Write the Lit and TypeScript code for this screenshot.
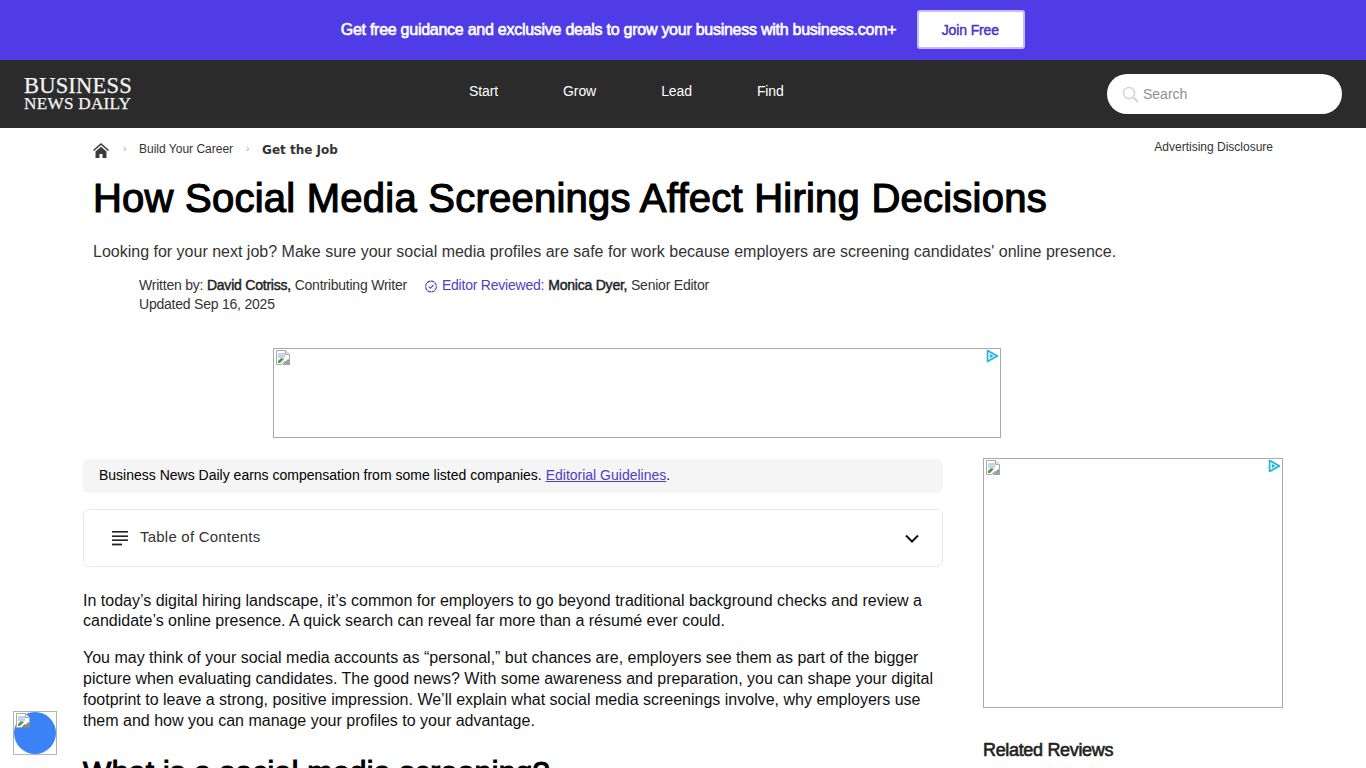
import { LitElement, html, css, svg } from 'lit';
import { customElement } from 'lit/decorators.js';

const brokenImage = svg`<svg class="broken" width="16" height="16" viewBox="0 0 16 16">
  <path d="M1.5 .5h9l4 4v5l-3 3-2-1-3 3h-5z" fill="#fff" stroke="#a9a9a9"/>
  <path d="M10.5 .5v4h4" fill="#e6e6e6" stroke="#a9a9a9"/>
  <path d="M3 3h7v5H3z" fill="#c3d5f2"/>
  <path d="M3 11l3-3 3 1-4 4H3z" fill="#4a9d4a"/>
  <path d="M8 14l5-5 2 1v5H8z" fill="#8b8b8b" opacity=".8"/>
</svg>`;

const adChoice = svg`<svg class="adchoice" width="14" height="14" viewBox="0 0 14 14">
  <path d="M2.5 1.5v11l10-5.5z" fill="#d6f2f8" stroke="#27b4d6" stroke-width="1.6" stroke-linejoin="round"/>
  <path d="M5 5v4l3.5-2z" fill="#27b4d6"/>
</svg>`;

@customElement('app-root')
export class AppRoot extends LitElement {
  static styles = css`
    :host {
      display: block;
      height: 768px;
      overflow: hidden;
      position: relative;
      font-family: 'Liberation Sans', Arial, sans-serif;
      color: #000;
      background: #fff;
    }
    a { color: inherit; text-decoration: none; }

    .promo {
      height: 60px;
      background: #4f3ce6;
      display: flex;
      align-items: center;
      justify-content: center;
      gap: 21px;
      color: #fff;
      font-size: 16px;
      letter-spacing: -0.26px;
      -webkit-text-stroke: 0.6px currentColor;
    }
    .join {
      width: 108px;
      height: 39px;
      margin-bottom: 1px;
      padding-right: 2px;
      box-sizing: border-box;
      background: #fff;
      border: 2px solid #c5bef6;
      border-radius: 3px;
      color: #4438c4;
      font: 400 14px 'Liberation Sans', Arial, sans-serif;
      letter-spacing: -0.12px;
      -webkit-text-stroke: 0.45px currentColor;
      display: flex;
      align-items: center;
      justify-content: center;
    }

    .topbar {
      height: 68px;
      background: #2b2b2b;
      display: flex;
      align-items: center;
      padding: 0 24px;
      color: #fff;
    }
    .logo {
      width: 445px;
      font-family: 'Liberation Serif', 'DejaVu Serif', serif;
      color: #f4f4f4;
      line-height: 1;
      padding-bottom: 2px;
      -webkit-text-stroke: 0.25px currentColor;
    }
    .logo div:first-child { font-size: 22.5px; height: 20px; letter-spacing: 0.2px; }
    .logo div:last-child { font-size: 17.2px; height: 16px; letter-spacing: 0.25px; }
    .nav {
      display: flex;
      gap: 65px;
      font-size: 14px;
      flex: 1;
      padding-bottom: 6px;
      letter-spacing: -0.1px;
    }
    .search {
      width: 235px;
      height: 40px;
      background: #fff;
      border-radius: 20px;
      display: flex;
      align-items: center;
      gap: 4px;
      padding-left: 15px;
      box-sizing: border-box;
      color: #8f8f8f;
      font-size: 14px;
    }

    .page { padding: 0 83px; }

    .crumbs {
      height: 42px;
      display: flex;
      align-items: flex-start;
      padding-left: 10px;
      color: #333;
      font-size: 12px;
    }
    .crumbs > * { margin-top: 14px; }
    .crumbs svg.home { margin-top: 15px; margin-right: 14px; }
    .sep { color: #aaa; width: 16px; margin-top: 15px !important; font-size: 10px; }
    .crumb { margin-right: 13px; }
    .crumbs b {
      font-family: 'DejaVu Sans', Verdana, sans-serif;
      font-size: 12px;
      margin-top: 15px;
    }
    .disclosure { margin-left: auto; margin-right: 10px; margin-top: 12px !important; color: #333; }

    h1 {
      margin: 0 0 0 10px;
      font-size: 40px;
      line-height: 56px;
      font-weight: 400;
      color: #000;
      letter-spacing: 0.235px;
      -webkit-text-stroke: 1.2px currentColor;
    }
    .dek {
      margin: 14px 0 0 10px;
      font-size: 16px;
      line-height: 24px;
      color: #333;
    }
    .byline {
      margin: 12px 0 0 56px;
      font-size: 14px;
      line-height: 19px;
      color: #333;
      letter-spacing: -0.22px;
    }
    .byline b { color: #222; font-weight: 400; -webkit-text-stroke: 0.45px currentColor; }
    .byline .row { display: flex; align-items: center; }
    .reviewed { color: #4f3ec4; margin-left: 17px; display: flex; align-items: center; gap: 4px; margin-right: 4px; }

    .ad-top {
      width: 728px;
      height: 90px;
      box-sizing: border-box;
      margin: 34px 0 20px 190px;
      border: 1px solid #aaa;
      position: relative;
    }
    .broken { position: absolute; left: 1px; top: 1px; }
    .adchoice { position: absolute; right: 1px; top: 0; }

    .columns { display: flex; gap: 40px; }
    .main { width: 860px; flex: none; }

    .notice {
      height: 34px;
      margin-top: 1px;
      padding-bottom: 2px;
      box-sizing: border-box;
      background: #f5f5f5;
      border-radius: 6px;
      padding-left: 16px;
      line-height: 32px;
      font-size: 14px;
    }
    .notice a { color: #4f3ec4; text-decoration: underline; }

    .toc {
      margin: 16px 0 23.55px;
      height: 58px;
      box-sizing: border-box;
      border: 1px solid #e8e8e8;
      border-radius: 6px;
      display: flex;
      align-items: center;
      padding: 0 23px 4px 28px;
      gap: 11px;
      color: #333;
      font-size: 15px;
      letter-spacing: 0.22px;
    }
    .toc span { flex: 1; }
    .toc svg:first-child { margin-top: 4px; }
    .toc svg:last-child { margin-top: 4px; }

    p {
      margin: 0 0 16px;
      font-size: 16px;
      line-height: 20.8px;
      color: #111;
    }
    h2 {
      margin: 21px 0 0;
      font-size: 30px;
      line-height: 40px;
      font-weight: 400;
      letter-spacing: 0.35px;
      -webkit-text-stroke: 1.1px currentColor;
    }

    .side { width: 300px; }
    .ad-side {
      width: 300px;
      height: 250px;
      box-sizing: border-box;
      border: 1px solid #aaa;
      position: relative;
    }
    .side h3 {
      margin: 31px 0 0;
      font-size: 18px;
      line-height: 22px;
      font-weight: 400;
      color: #222;
      letter-spacing: -0.33px;
      -webkit-text-stroke: 0.6px currentColor;
    }

    .a11y {
      position: absolute;
      left: 13px;
      top: 711px;
      width: 44px;
      height: 44px;
      box-sizing: border-box;
      border: 1px solid #b4b4b4;
    }
    .a11y i {
      position: absolute;
      left: 0;
      top: 0;
      width: 42px;
      height: 42px;
      border-radius: 50%;
      background: #3b82f6;
    }
  `;

  render() {
    return html`
      <div class="promo">
        <span>Get free guidance and exclusive deals to grow your business with business.com+</span>
        <a class="join" href="#">Join Free</a>
      </div>

      <header class="topbar">
        <a class="logo" href="#"><div>BUSINESS</div><div>NEWS DAILY</div></a>
        <nav class="nav">
          <a href="#">Start</a><a href="#">Grow</a><a href="#">Lead</a><a href="#">Find</a>
        </nav>
        <div class="search">
          <svg width="17" height="17" viewBox="0 0 17 17" fill="none" stroke="#d4d4d4">
            <circle cx="7" cy="7" r="5.6" stroke-width="1.5"/>
            <path d="M11 11l5 5" stroke-width="2"/>
          </svg>
          Search
        </div>
      </header>

      <div class="page">
        <div class="crumbs">
          <svg class="home" width="16" height="15" viewBox="0 0 16 15" fill="#3c3c3c">
            <path d="M8 0L0 7l1 1 7-6 7 6 1-1z"/>
            <path d="M2.5 8.5L8 3.8l5.5 4.7V15H9.5v-4h-3v4h-4z"/>
          </svg>
          <span class="sep">›</span>
          <a class="crumb" href="#">Build Your Career</a>
          <span class="sep">›</span>
          <b>Get the Job</b>
          <a class="disclosure" href="#">Advertising Disclosure</a>
        </div>

        <h1>How Social Media Screenings Affect Hiring Decisions</h1>
        <div class="dek">Looking for your next job? Make sure your social media profiles are safe for work because employers are screening candidates' online presence.</div>

        <div class="byline">
          <div class="row">
            <span>Written by: <b>David Cotriss,</b> Contributing Writer</span>
            <span class="reviewed">
              <svg width="14" height="14" viewBox="0 0 14 14" fill="none" stroke="#4f3ec4" stroke-width="1.1">
                <circle cx="7" cy="7.5" r="5.4" stroke-dasharray="3.6 .5"/>
                <path d="M4.6 7.7l1.7 1.6 3.2-3.3"/>
              </svg>
              Editor Reviewed:
            </span>
            <span><b>Monica Dyer,</b> Senior Editor</span>
          </div>
          <div>Updated Sep 16, 2025</div>
        </div>

        <div class="ad-top">${brokenImage}${adChoice}</div>

        <div class="columns">
          <main class="main">
            <div class="notice">Business News Daily earns compensation from some listed companies. <a href="#">Editorial Guidelines</a>.</div>

            <div class="toc">
              <svg width="17" height="16" viewBox="0 0 17 16" fill="#222">
                <rect x="0" y="1" width="16" height="1.6"/>
                <rect x="0" y="5.4" width="16" height="1.6"/>
                <rect x="0" y="9.4" width="16" height="1.6"/>
                <rect x="0" y="13.6" width="10" height="1.8"/>
              </svg>
              <span>Table of Contents</span>
              <svg width="14" height="9" viewBox="0 0 14 9" fill="none" stroke="#111" stroke-width="2">
                <path d="M1 1.5l6 6 6-6"/>
              </svg>
            </div>

            <p>In today’s digital hiring landscape, it’s common for employers to go beyond traditional background checks and review a candidate’s online presence. A quick search can reveal far more than a résumé ever could.</p>
            <p>You may think of your social media accounts as “personal,” but chances are, employers see them as part of the bigger picture when evaluating candidates. The good news? With some awareness and preparation, you can shape your digital footprint to leave a strong, positive impression. We’ll explain what social media screenings involve, why employers use them and how you can manage your profiles to your advantage.</p>
            <h2>What is a social media screening?</h2>
          </main>

          <aside class="side">
            <div class="ad-side">${brokenImage}${adChoice}</div>
            <h3>Related Reviews</h3>
          </aside>
        </div>
      </div>

      <div class="a11y"><i></i>${brokenImage}</div>
    `;
  }
}
